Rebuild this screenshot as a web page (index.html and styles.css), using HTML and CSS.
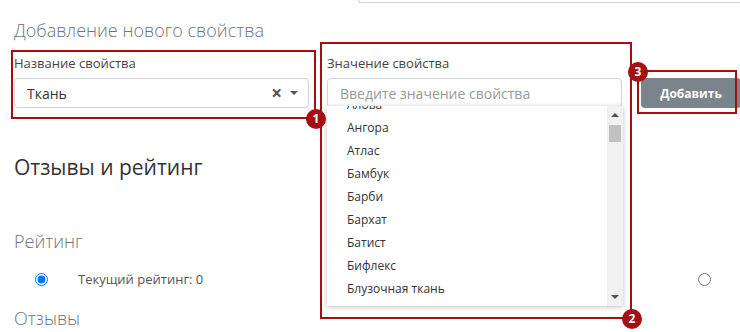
FILE: index.html
```html
<!DOCTYPE html>
<html lang="ru">

<head>
    <meta charset="UTF-8" />
    <meta name="viewport" content="width=device-width, initial-scale=1.0" />
    <title>Добавление свойства</title>
    <link rel="stylesheet" href="styles.css">
</head>

<body>
    <div class="top-input"></div>

    <div class="container">
        <h3 class="section-title">Добавление нового свойства</h3>

        <div class="form-row">
            <div class="field">
                <label class="field-label">Название свойства</label>
                <div class="select-box">
                    <span class="select-value">Ткань</span>
                    <span class="select-clear">×</span>
                    <span class="select-caret"></span>
                </div>
                <div class="note-frame note-1"><span class="badge">1</span></div>
            </div>

            <div class="field">
                <label class="field-label">Значение свойства</label>
                <input type="text" class="text-input" placeholder="Введите значение свойства" />
                <div class="dropdown">
                    <ul class="dropdown-list">
                        <li>Алова</li>
                        <li>Ангора</li>
                        <li>Атлас</li>
                        <li>Бамбук</li>
                        <li>Барби</li>
                        <li>Бархат</li>
                        <li>Батист</li>
                        <li>Бифлекс</li>
                        <li>Блузочная ткань</li>
                    </ul>
                    <div class="scrollbar">
                        <span class="arrow-up"></span>
                        <span class="thumb"></span>
                        <span class="arrow-down"></span>
                    </div>
                </div>
                <div class="note-frame note-2"><span class="badge">2</span></div>
            </div>

            <div class="field field-button">
                <button class="btn-add">Добавить</button>
                <div class="note-frame note-3"><span class="badge">3</span></div>
            </div>
        </div>

        <h2 class="reviews-title">Отзывы и рейтинг</h2>

        <h4 class="sub-title">Рейтинг</h4>
        <div class="rating-row">
            <input type="radio" name="rating" checked />
            <span class="rating-text">Текущий рейтинг: 0</span>
            <input type="radio" name="rating" class="radio-right" />
        </div>

        <h4 class="sub-title sub-reviews">Отзывы</h4>
    </div>
</body>

</html>
```

FILE: styles.css
```css
:root {
    --note-red: #a30f12;
    --text-main: #333;
    --text-muted: #6c757d;
    --border: #ced4da;
}

body {
    font-family: 'Open Sans', 'Noto Sans', sans-serif;
    margin: 0;
    color: var(--text-main);
    background: #fff;
    overflow: hidden;
}

.top-input {
    height: 2px;
    margin-left: 358px;
    border-left: 1px solid var(--border);
    border-bottom: 1px solid var(--border);
    border-bottom-left-radius: 3px;
}

.container {
    padding: 0 0 0 14px;
}

.section-title {
    margin: 16px 0 0;
    font-size: 18px;
    line-height: 23px;
    font-weight: 300;
    color: var(--text-muted);
}

.form-row {
    display: flex;
    align-items: flex-start;
    gap: 18px;
    margin-top: 12px;
    height: 54px;
}

.field {
    position: relative;
    width: 295px;
    flex: none;
}

.field-label {
    display: block;
    font-size: 13px;
    line-height: 18px;
    color: #444;
    margin-bottom: 6px;
}

.select-box,
.text-input {
    box-sizing: border-box;
    height: 30px;
    width: 100%;
    border: 1px solid var(--border);
    border-radius: 4px;
    background: #fff;
    font-family: inherit;
    font-size: 14px;
}

.select-box {
    display: flex;
    align-items: center;
    padding: 0 10px 0 12px;
}

.select-value {
    flex: 1;
    color: var(--text-main);
}

.select-clear {
    font-size: 19px;
    font-weight: 700;
    color: #555;
    line-height: 1;
    margin-right: 8px;
}

.select-caret {
    width: 0;
    height: 0;
    border-left: 4px solid transparent;
    border-right: 4px solid transparent;
    border-top: 4px solid #555;
}

.text-input {
    padding: 0 12px;
    color: var(--text-main);
    outline: none;
}

.text-input::placeholder {
    color: #999;
}

.dropdown {
    position: absolute;
    top: 52px;
    left: 0;
    width: 296px;
    height: 200px;
    background: #fff;
    box-shadow: 0 1px 5px rgba(0, 0, 0, 0.25);
    display: flex;
    overflow: hidden;
    z-index: 2;
}

.dropdown-list {
    list-style: none;
    margin: -13px 0 0;
    padding: 0;
    flex: 1;
}

.dropdown-list li {
    height: 23px;
    line-height: 23px;
    padding-left: 20px;
    font-size: 12px;
    color: var(--text-main);
}

.scrollbar {
    width: 16px;
    background: #f1f1f1;
    display: flex;
    flex-direction: column;
    align-items: center;
}

.arrow-up,
.arrow-down {
    width: 0;
    height: 0;
    border-left: 4px solid transparent;
    border-right: 4px solid transparent;
}

.arrow-up {
    margin-top: 7px;
    border-bottom: 4px solid #505050;
}

.thumb {
    width: 12px;
    height: 17px;
    margin-top: 8px;
    background: #c1c1c1;
}

.arrow-down {
    margin-top: auto;
    margin-bottom: 7px;
    border-top: 4px solid #505050;
}

.field-button {
    width: 100px;
    margin-left: 1px;
    margin-top: 24px;
}

.btn-add {
    width: 100px;
    height: 30px;
    border: none;
    border-radius: 4px;
    background: #7b848b;
    color: #fff;
    font-family: inherit;
    font-size: 12px;
    font-weight: 700;
}

.note-frame {
    position: absolute;
    border: 2px solid var(--note-red);
    pointer-events: none;
    z-index: 3;
}

.note-1 {
    top: -4px;
    left: -3px;
    right: -7px;
    bottom: -11px;
}

.note-2 {
    top: -12px;
    left: -7px;
    right: -10px;
    bottom: -211px;
}

.note-3 {
    top: -8px;
    left: -4px;
    right: 4px;
    bottom: -6px;
}

.badge {
    position: absolute;
    width: 20px;
    height: 20px;
    border-radius: 50%;
    background: var(--note-red);
    color: #fff;
    font-size: 12px;
    font-weight: 700;
    line-height: 20px;
    text-align: center;
}

.note-1 .badge,
.note-2 .badge {
    right: -12px;
    bottom: -12px;
}

.note-3 .badge {
    left: -11px;
    top: -10px;
}

.reviews-title {
    margin: 45px 0 0;
    font-size: 21px;
    line-height: 28px;
    font-weight: 400;
    color: var(--text-main);
}

.sub-title {
    margin: 48px 0 0;
    font-size: 18px;
    line-height: 24px;
    font-weight: 300;
    color: var(--text-muted);
}

.rating-row {
    display: flex;
    align-items: center;
    height: 20px;
    margin-top: 16px;
    padding-left: 21px;
    padding-right: 29px;
}

.rating-row input {
    width: 13px;
    height: 13px;
    margin: 0;
}

.rating-text {
    margin-left: 30px;
    font-size: 13px;
    color: #555;
}

.radio-right {
    margin-left: auto !important;
}

.sub-reviews {
    margin-top: 17px;
}
```
